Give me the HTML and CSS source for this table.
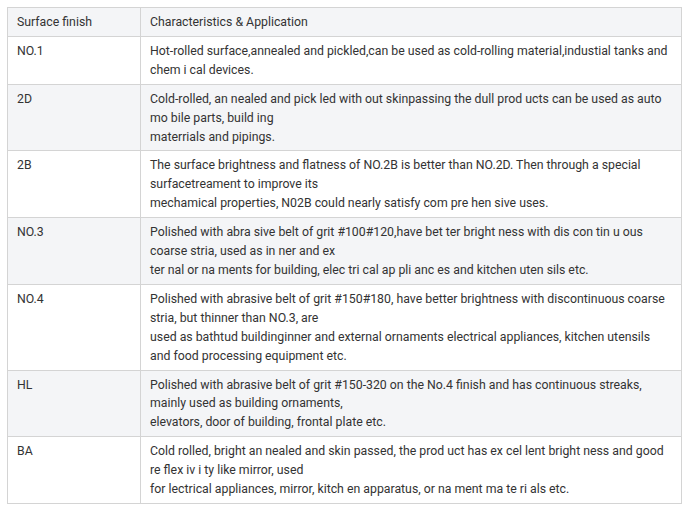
FILE: index.html
```html
<!DOCTYPE html>
<html lang="en">
<head>
    <meta charset="UTF-8">
    <meta name="viewport" content="width=device-width, initial-scale=1.0">
    <title>Surface finish</title>
    <link rel="stylesheet" href="styles.css">
</head>
<body>
    <table class="finish-table">
        <tr>
            <td class="col-name">Surface finish</td>
            <td>Characteristics &amp; Application</td>
        </tr>
        <tr>
            <td class="col-name">NO.1</td>
            <td>Hot-rolled surface,annealed and pickled,can be used as cold-rolling material,industial tanks and<br>chem i cal devices.</td>
        </tr>
        <tr>
            <td class="col-name">2D</td>
            <td>Cold-rolled, an nealed and pick led with out skinpassing the dull prod ucts can be used as auto<br>mo bile parts, build ing<br>materrials and pipings.</td>
        </tr>
        <tr>
            <td class="col-name">2B</td>
            <td>The surface brightness and flatness of NO.2B is better than NO.2D. Then through a special<br>surfacetreament to improve its<br>mechamical properties, N02B could nearly satisfy com pre hen sive uses.</td>
        </tr>
        <tr>
            <td class="col-name">NO.3</td>
            <td>Polished with abra sive belt of grit #100#120,have bet ter bright ness with dis con tin u ous<br>coarse stria, used as in ner and ex<br>ter nal or na ments for building, elec tri cal ap pli anc es and kitchen uten sils etc.</td>
        </tr>
        <tr>
            <td class="col-name">NO.4</td>
            <td>Polished with abrasive belt of grit #150#180, have better brightness with discontinuous coarse<br>stria, but thinner than NO.3, are<br>used as bathtud buildinginner and external ornaments electrical appliances, kitchen utensils<br>and food processing equipment etc.</td>
        </tr>
        <tr>
            <td class="col-name">HL</td>
            <td>Polished with abrasive belt of grit #150-320 on the No.4 finish and has continuous streaks,<br>mainly used as building ornaments,<br>elevators, door of building, frontal plate etc.</td>
        </tr>
        <tr>
            <td class="col-name">BA</td>
            <td>Cold rolled, bright an nealed and skin passed, the prod uct has ex cel lent bright ness and good<br>re flex iv i ty like mirror, used<br>for lectrical appliances, mirror, kitch en apparatus, or na ment ma te ri als etc.</td>
        </tr>
    </table>
</body>
</html>
```

FILE: styles.css
```css
body {
    margin: 7px;
    background: #fff;
    font-family: Roboto, 'Liberation Sans', Arial, sans-serif;
    font-size: 12.3px;
    color: #333;
}
.finish-table {
    width: 675px;
    border-collapse: collapse;
    border: 1px solid #cfcfcf;
}
.finish-table td {
    padding: 5px 9px 4px 9px;
    line-height: 18.9px;
    vertical-align: top;
    border: 1px solid #d4d4d4;
    white-space: nowrap;
}
.finish-table tr:nth-child(odd) {
    background: #f4f5f7;
}
.col-name {
    width: 114px;
}
```
